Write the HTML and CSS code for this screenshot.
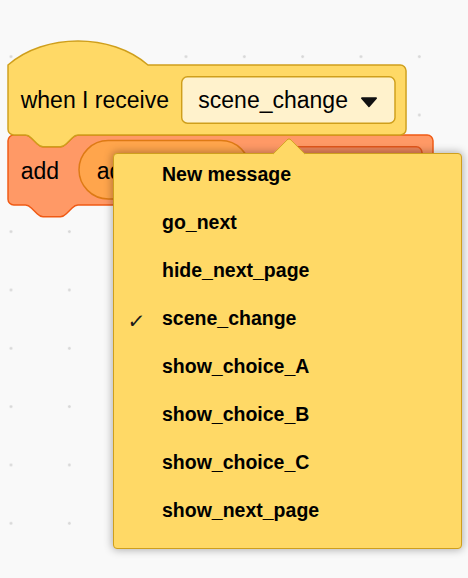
FILE: index.html
```html
<!DOCTYPE html>
<html>
<head>
<meta charset="utf-8">
<link rel="stylesheet" href="styles.css">
</head>
<body>
<div class="workspace">
  <svg class="canvas" width="468" height="578" viewBox="0 0 468 578">
    <g transform="translate(8 135) scale(1.458)">
      <path class="list-block" d="M 0,4 A 4,4 0 0,1 4,0 H 12 c 2,0 3,1 4,2 l 4,4 c 1,1 2,2 4,2 h 12 c 2,0 3,-1 4,-2 l 4,-4 c 1,-1 2,-2 4,-2 H 287.5 a 4,4 0 0,1 4,4 V 44 a 4,4 0 0,1 -4,4 H 48 c -2,0 -3,1 -4,2 l -4,4 c -1,1 -2,2 -4,2 h -12 c -2,0 -3,-1 -4,-2 l -4,-4 c -1,-1 -2,-2 -4,-2 H 4 a 4,4 0 0,1 -4,-4 z"/>
    </g>
    <rect class="var-reporter" x="79" y="140.6" width="171" height="58.3" rx="29.15"/>
    <rect class="list-field" x="288" y="146.7" width="134" height="46.7" rx="5.8"/>
    <g transform="translate(8 65) scale(1.458)">
      <path class="event-block" d="M 0,0 c 25,-22 71,-22 96,0 H 269 a 4,4 0 0,1 4,4 V 44 a 4,4 0 0,1 -4,4 H 48 c -2,0 -3,1 -4,2 l -4,4 c -1,1 -2,2 -4,2 h -12 c -2,0 -3,-1 -4,-2 l -4,-4 c -1,-1 -2,-2 -4,-2 H 4 a 4,4 0 0,1 -4,-4 z"/>
    </g>
    <rect class="event-field" x="181.7" y="76.7" width="213.3" height="46.6" rx="5.8"/>
    <path class="field-arrow" d="M 362,98.2 L 376,98.2 L 369,106.2 Z"/>
    <text class="block-text" x="20.7" y="108.3">when I receive</text>
    <text class="block-text" x="198.3" y="108.3">scene_change</text>
    <text class="block-text" x="20.7" y="179">add</text>
    <text class="block-text" x="96.7" y="179">ad</text>
  </svg>

  <div class="menu">
    <div class="menu-arrow"></div>
    <div class="menu-item">New message</div>
    <div class="menu-item">go_next</div>
    <div class="menu-item">hide_next_page</div>
    <div class="menu-item checked"><span class="check">✓</span>scene_change</div>
    <div class="menu-item">show_choice_A</div>
    <div class="menu-item">show_choice_B</div>
    <div class="menu-item">show_choice_C</div>
    <div class="menu-item">show_next_page</div>
  </div>
</div>
</body>
</html>
```

FILE: styles.css
```css
html, body {
  margin: 0;
  padding: 0;
}

body {
  width: 468px;
  height: 578px;
  overflow: hidden;
  background-color: #f9f9f9;
  background-image: radial-gradient(circle at center, #d8d8d8 0, #d8d8d8 1px, rgba(216,216,216,0) 1.7px);
  background-size: 58.33px 58.33px;
  background-position: -18.17px 27.5px;
  font-family: "Liberation Sans", Arial, sans-serif;
}

.workspace {
  position: relative;
  width: 468px;
  height: 578px;
}

.canvas {
  display: block;
}

.list-block {
  fill: #ff9966;
  stroke: #f05a14;
  stroke-width: 1;
}

.event-block {
  fill: #ffd966;
  stroke: #cf9f1c;
  stroke-width: 1;
}

.event-field {
  fill: #fff2cc;
  stroke: #cf9f1c;
  stroke-width: 1.458;
}

.var-reporter {
  fill: #ffa54c;
  stroke: #de7a14;
  stroke-width: 1.458;
}

.list-field {
  fill: #ea855b;
  stroke: #e2561a;
  stroke-width: 1.458;
}

.field-arrow {
  fill: #111;
  stroke: #111;
  stroke-width: 2;
  stroke-linejoin: round;
}

.block-text {
  font-family: "Liberation Sans", Arial, sans-serif;
  font-size: 23px;
  fill: #000;
}

.menu {
  position: absolute;
  left: 113px;
  top: 153px;
  width: 349px;
  height: 396px;
  box-sizing: border-box;
  padding: 1px 0 9px;
  background: #ffd966;
  border: 1px solid #cf9f1c;
  border-radius: 4px;
  box-shadow: 0 0 8px 1px rgba(0, 0, 0, 0.3);
}

.menu-arrow {
  position: absolute;
  left: 163px;
  top: -12px;
  width: 24px;
  height: 24px;
  box-sizing: border-box;
  background: #ffd966;
  border-top: 1px solid #cf9f1c;
  border-left: 1px solid #cf9f1c;
  border-top-left-radius: 4px;
  transform: rotate(45deg);
}

.menu-item {
  position: relative;
  line-height: 38px;
  padding: 0 0 10px 48px;
  font-family: "Liberation Sans", Arial, sans-serif;
  font-weight: bold;
  font-size: 19.5px;
  color: #000;
  white-space: nowrap;
}

.check {
  position: absolute;
  left: 14px;
  top: 3px;
  font-family: "DejaVu Sans", sans-serif;
  font-weight: bold;
  font-size: 20px;
  color: #1a1a1a;
  transform: skewX(-8deg);
}
```
